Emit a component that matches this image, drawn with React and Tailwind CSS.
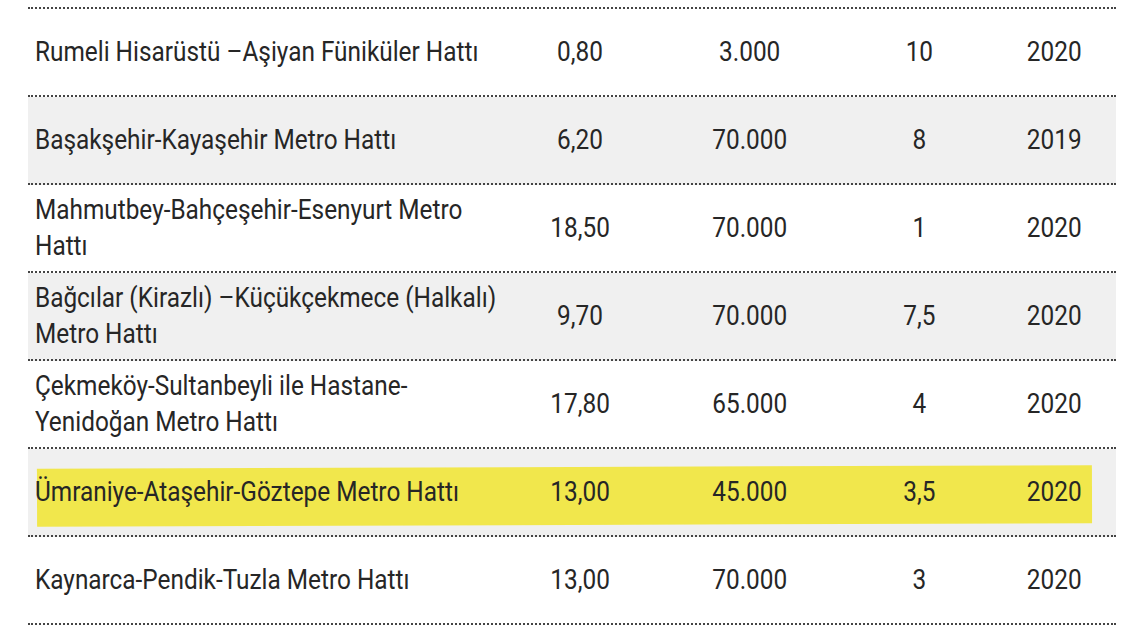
const rows = [
  { name: 'Rumeli Hisarüstü –Aşiyan Füniküler Hattı', km: '0,80', cap: '3.000', n: '10', year: '2020' },
  { name: 'Başakşehir-Kayaşehir Metro Hattı', km: '6,20', cap: '70.000', n: '8', year: '2019', gray: true },
  { name: 'Mahmutbey-Bahçeşehir-Esenyurt Metro Hattı', km: '18,50', cap: '70.000', n: '1', year: '2020' },
  { name: 'Bağcılar (Kirazlı) –Küçükçekmece (Halkalı) Metro Hattı', km: '9,70', cap: '70.000', n: '7,5', year: '2020', gray: true },
  { name: 'Çekmeköy-Sultanbeyli ile Hastane-Yenidoğan Metro Hattı', km: '17,80', cap: '65.000', n: '4', year: '2020' },
  { name: 'Ümraniye-Ataşehir-Göztepe Metro Hattı', km: '13,00', cap: '45.000', n: '3,5', year: '2020', gray: true, mark: true },
  { name: 'Kaynarca-Pendik-Tuzla Metro Hattı', km: '13,00', cap: '70.000', n: '3', year: '2020' },
];

function Row({ row }) {
  return (
    <div className={`relative h-[88px] flex items-center pl-[7px] border-b-2 border-dotted border-[#444] ${row.gray ? 'bg-[#f0f0f0]' : 'bg-white'}`}>
      {row.mark && (
        <span className="absolute left-[9px] right-[24px] top-[18px] h-[58px] bg-[#f1e74c] -rotate-[0.2deg]" />
      )}
      {/* condensed look: Roboto squeezed horizontally */}
      <div className="relative w-[1252px] shrink-0 flex items-center scale-x-[0.87] origin-left">
        <div className="w-[552px] shrink-0 pr-1 leading-[36px]">{row.name}</div>
        <div className="w-[149px] shrink-0 text-center">{row.km}</div>
        <div className="w-[241px] shrink-0 text-center">{row.cap}</div>
        <div className="w-[149px] shrink-0 text-center">{row.n}</div>
        <div className="w-[161px] shrink-0 text-center">{row.year}</div>
      </div>
    </div>
  );
}

export default function App() {
  return (
    <div className="w-[1144px] h-[634px] bg-white overflow-hidden pt-[7px] pl-[28px] pr-[28px] text-[#262626] text-[28px] font-['Roboto','Liberation_Sans',sans-serif]">
      <div className="border-t-2 border-dotted border-[#444] overflow-hidden">
        {rows.map((row) => (
          <Row key={row.name} row={row} />
        ))}
      </div>
    </div>
  );
}
